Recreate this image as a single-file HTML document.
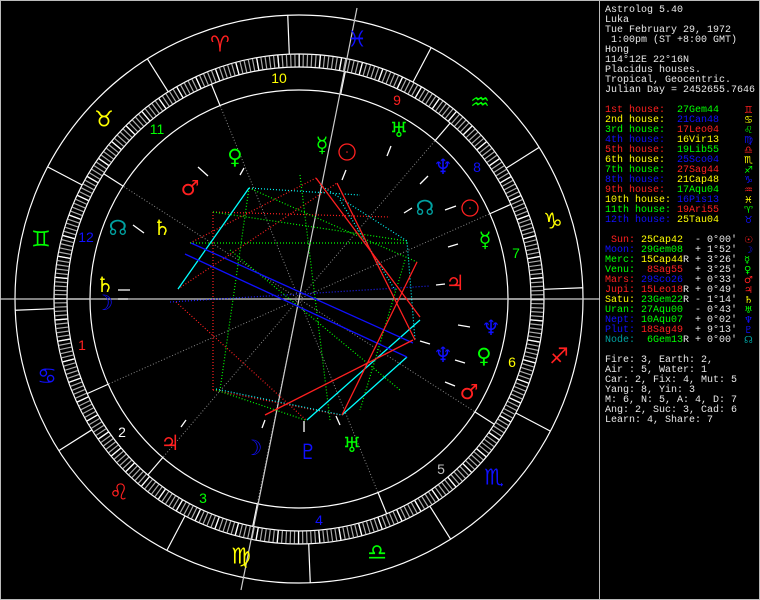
<!DOCTYPE html>
<html><head><meta charset="utf-8"><style>
html,body{margin:0;padding:0;background:#000;}
#w{position:relative;width:760px;height:600px;background:#000;overflow:hidden;}
svg{position:absolute;left:0;top:0;}
.t{position:absolute;left:605px;font:10px/10px "Liberation Mono","DejaVu Sans Mono",monospace;white-space:pre;color:#e8e8e8;}
.g{position:absolute;left:744px;height:10px;overflow:hidden;font:10px/10px "DejaVu Sans",sans-serif;}
.r{color:#ff2020}.y{color:#ffff00}.gr{color:#00ff00}.b{color:#1010ff}.tl{color:#00a0a0}.w{color:#fff}
</style></head><body><div id="w">
<svg width="760" height="600" viewBox="0 0 760 600">
<rect x="0.5" y="0.5" width="759" height="599" fill="none" stroke="#bbb"/>
<line x1="599.5" y1="0" x2="599.5" y2="600" stroke="#bbb"/>
<g fill="none" stroke="#fff" stroke-width="1.2">
<circle cx="299" cy="299" r="284"/>
<circle cx="299" cy="299" r="245"/>
<circle cx="299" cy="299" r="232"/>
<circle cx="299" cy="299" r="209"/>
</g>
<circle cx="299" cy="299" r="238.5" fill="none" stroke="#aaa" stroke-width="12" stroke-dasharray="1.2 2.96"/>
<circle cx="299" cy="299" r="238.5" fill="none" stroke="#fff" stroke-width="12" stroke-dasharray="1.3 19.5"/>
<g stroke="#fff" stroke-width="1.2">
<line x1="544" y1="299" x2="583" y2="299" transform="rotate(-92.27 299 299)"/>
<line x1="544" y1="299" x2="583" y2="299" transform="rotate(-122.27 299 299)"/>
<line x1="544" y1="299" x2="583" y2="299" transform="rotate(-152.27 299 299)"/>
<line x1="544" y1="299" x2="583" y2="299" transform="rotate(-182.27 299 299)"/>
<line x1="544" y1="299" x2="583" y2="299" transform="rotate(-212.27 299 299)"/>
<line x1="544" y1="299" x2="583" y2="299" transform="rotate(-242.27 299 299)"/>
<line x1="544" y1="299" x2="583" y2="299" transform="rotate(-272.27 299 299)"/>
<line x1="544" y1="299" x2="583" y2="299" transform="rotate(-302.27 299 299)"/>
<line x1="544" y1="299" x2="583" y2="299" transform="rotate(-332.27 299 299)"/>
<line x1="544" y1="299" x2="583" y2="299" transform="rotate(-2.27 299 299)"/>
<line x1="544" y1="299" x2="583" y2="299" transform="rotate(-32.27 299 299)"/>
<line x1="544" y1="299" x2="583" y2="299" transform="rotate(-62.27 299 299)"/>
</g>
<g stroke="#fff" stroke-width="1.2">
<line x1="508" y1="299" x2="531" y2="299" transform="rotate(-180 299 299)"/>
<line x1="508" y1="299" x2="531" y2="299" transform="rotate(-204.07 299 299)"/>
<line x1="508" y1="299" x2="531" y2="299" transform="rotate(-229.33 299 299)"/>
<line x1="508" y1="299" x2="531" y2="299" transform="rotate(-258.5 299 299)"/>
<line x1="508" y1="299" x2="531" y2="299" transform="rotate(-292.2 299 299)"/>
<line x1="508" y1="299" x2="531" y2="299" transform="rotate(-327.33 299 299)"/>
<line x1="508" y1="299" x2="531" y2="299" transform="rotate(0 299 299)"/>
<line x1="508" y1="299" x2="531" y2="299" transform="rotate(-24.07 299 299)"/>
<line x1="508" y1="299" x2="531" y2="299" transform="rotate(-49.33 299 299)"/>
<line x1="508" y1="299" x2="531" y2="299" transform="rotate(-78.5 299 299)"/>
<line x1="508" y1="299" x2="531" y2="299" transform="rotate(-112.2 299 299)"/>
<line x1="508" y1="299" x2="531" y2="299" transform="rotate(-147.33 299 299)"/>
</g>
<g stroke="#888" stroke-width="1" stroke-dasharray="1 2">
<line x1="299" y1="299" x2="508" y2="299" transform="rotate(-204.07 299 299)"/>
<line x1="299" y1="299" x2="508" y2="299" transform="rotate(-229.33 299 299)"/>
<line x1="299" y1="299" x2="508" y2="299" transform="rotate(-258.5 299 299)"/>
<line x1="299" y1="299" x2="508" y2="299" transform="rotate(-292.2 299 299)"/>
<line x1="299" y1="299" x2="508" y2="299" transform="rotate(-327.33 299 299)"/>
<line x1="299" y1="299" x2="508" y2="299" transform="rotate(-24.07 299 299)"/>
<line x1="299" y1="299" x2="508" y2="299" transform="rotate(-49.33 299 299)"/>
<line x1="299" y1="299" x2="508" y2="299" transform="rotate(-112.2 299 299)"/>
<line x1="299" y1="299" x2="508" y2="299" transform="rotate(-147.33 299 299)"/>
</g>
<line x1="0" y1="299" x2="600" y2="299" stroke="#ccc" stroke-width="1.2"/>
<line x1="357" y1="8" x2="241" y2="590" stroke="#ccc" stroke-width="1.2"/>
<g stroke-width="1.2" stroke-dasharray="1 2" fill="none">
<path stroke="#ff2020" d="M213 212L213 390M213 212L390 217M190 243L316 178M178 289L337 183M176 302L306 420M213 390L340 415"/>
<path stroke="#00ff00" d="M213 212L407 241M190 243L407 243M249 188L417 262M249 188L220 390M216 390L305 420M300 175L330 420M405 260L360 410M230 250L400 390"/>
<path stroke="#00ffff" d="M249 188L360 195M216 389L342 415M320 185L407 241L415 340M340 200L395 290"/>
<path stroke="#2020ff" d="M170 302L430 286"/>
</g>
<g stroke-width="1.3" fill="none">
<path stroke="#00ffff" d="M178 289L249 188M307 420L420 320M342 415L407 357"/>
<path stroke="#1010ff" d="M191 243L413 343M185 254L407 357"/>
<path stroke="#ff2020" d="M316 178L420 317M337 183L415 340M417 262L342 415M265 415L413 340"/>
</g>
<g stroke="#fff" stroke-width="1.3">
<path d="M118 299L128 299M118 290L130 290M133 225L144 233M198 167L208 176M240 175L244 168M346 170L342 180M391 146L387 156M428 176L420 184M412 208L404 213M456 206L445 210M458 244L448 247M436 285L445 284M470 327L458 325M430 344L420 341M465 363L455 360M455 386L445 382M262 428L265 420M304 432L304 421M340 425L336 416M181 427L186 420"/>
</g>
<g font-family="'Liberation Sans',sans-serif" font-size="14" text-anchor="middle" dominant-baseline="central">
<text x="82" y="345" fill="#ff2020">1</text>
<text x="122" y="432" fill="#ffffff">2</text>
<text x="203" y="498" fill="#00ff00">3</text>
<text x="319" y="520" fill="#1010ff">4</text>
<text x="441" y="469" fill="#c0c0c0">5</text>
<text x="512" y="362" fill="#ffff00">6</text>
<text x="516" y="253" fill="#00ff00">7</text>
<text x="477" y="167" fill="#1010ff">8</text>
<text x="397" y="100" fill="#ff2020">9</text>
<text x="279" y="78" fill="#ffff00">10</text>
<text x="157" y="129" fill="#00ff00">11</text>
<text x="86" y="237" fill="#1010ff">12</text>
</g>
<g font-family="'DejaVu Sans',sans-serif" font-size="22" text-anchor="middle" dominant-baseline="central">
<text x="220" y="45" fill="#ff2020">♈</text>
<text x="104" y="120" fill="#ffff00">♉</text>
<text x="41" y="240" fill="#00ff00">♊</text>
<text x="47" y="377" fill="#1010ff">♋</text>
<text x="119" y="493" fill="#ff2020">♌</text>
<text x="241" y="557" fill="#ffff00">♍</text>
<text x="377" y="553" fill="#00ff00">♎</text>
<text x="494" y="478" fill="#1010ff">♏</text>
<text x="559" y="357" fill="#ff2020">♐</text>
<text x="553" y="222" fill="#ffff00">♑</text>
<text x="480" y="103" fill="#00ff00">♒</text>
<text x="357" y="40" fill="#1010ff">♓</text>
</g>
<g font-family="'DejaVu Sans',sans-serif" font-size="21" text-anchor="middle" dominant-baseline="central">
<text x="399" y="130" fill="#00ff00">♅</text>
<text x="443" y="167" fill="#1010ff">♆</text>
<text x="425" y="208" fill="#00a0a0">☊</text>
<text x="322" y="145" fill="#00ff00">☿</text>
<text x="235" y="157" fill="#00ff00">♀</text>
<text x="190" y="188" fill="#ff2020">♂</text>
<text x="162" y="228" fill="#ffff00">♄</text>
<text x="118" y="228" fill="#00a0a0">☊</text>
<text x="105" y="285" fill="#ffff00">♄</text>
<text x="104" y="303" fill="#1010ff">☽</text>
<text x="485" y="240" fill="#00ff00">☿</text>
<text x="455" y="283" fill="#ff2020">♃</text>
<text x="491" y="328" fill="#1010ff">♆</text>
<text x="443" y="355" fill="#1010ff">♆</text>
<text x="484" y="356" fill="#00ff00">♀</text>
<text x="469" y="392" fill="#ff2020">♂</text>
<text x="170" y="443" fill="#ff2020">♃</text>
<text x="253" y="448" fill="#1010ff">☽</text>
<text x="308" y="452" fill="#1010ff">♇</text>
<text x="352" y="445" fill="#00ff00">♅</text>
</g>
<circle cx="347" cy="152" r="8" fill="none" stroke="#ff2020" stroke-width="1.3"/>
<circle cx="347" cy="152" r="0.8" fill="#ff2020"/>
<circle cx="470" cy="208" r="8" fill="none" stroke="#ff2020" stroke-width="1.3"/>
<circle cx="470" cy="208" r="0.8" fill="#ff2020"/>
</svg>

<div class="t" style="top:6px">Astrolog 5.40</div>
<div class="t" style="top:16px">Luka</div>
<div class="t" style="top:26px">Tue February 29, 1972</div>
<div class="t" style="top:36px"> 1:00pm (ST +8:00 GMT)</div>
<div class="t" style="top:46px">Hong</div>
<div class="t" style="top:56px">114°12E 22°16N</div>
<div class="t" style="top:66px">Placidus houses.</div>
<div class="t" style="top:76px">Tropical, Geocentric.</div>
<div class="t" style="top:86px">Julian Day = 2452655.7646</div>

<div class="t" style="top:106px"><span class="r">1st house:</span>  <span class="gr">27Gem44</span></div><div class="g r" style="top:106px">♊</div>
<div class="t" style="top:116px"><span class="y">2nd house:</span>  <span class="b">21Can48</span></div><div class="g y" style="top:116px">♋</div>
<div class="t" style="top:126px"><span class="gr">3rd house:</span>  <span class="r">17Leo04</span></div><div class="g gr" style="top:126px">♌</div>
<div class="t" style="top:136px"><span class="b">4th house:</span>  <span class="y">16Vir13</span></div><div class="g b" style="top:136px">♍</div>
<div class="t" style="top:146px"><span class="r">5th house:</span>  <span class="gr">19Lib55</span></div><div class="g r" style="top:146px">♎</div>
<div class="t" style="top:156px"><span class="y">6th house:</span>  <span class="b">25Sco04</span></div><div class="g y" style="top:156px">♏</div>
<div class="t" style="top:166px"><span class="gr">7th house:</span>  <span class="r">27Sag44</span></div><div class="g gr" style="top:166px">♐</div>
<div class="t" style="top:176px"><span class="b">8th house:</span>  <span class="y">21Cap48</span></div><div class="g b" style="top:176px">♑</div>
<div class="t" style="top:186px"><span class="r">9th house:</span>  <span class="gr">17Aqu04</span></div><div class="g r" style="top:186px">♒</div>
<div class="t" style="top:196px"><span class="y">10th house:</span> <span class="b">16Pis13</span></div><div class="g y" style="top:196px">♓</div>
<div class="t" style="top:206px"><span class="gr">11th house:</span> <span class="r">19Ari55</span></div><div class="g gr" style="top:206px">♈</div>
<div class="t" style="top:216px"><span class="b">12th house:</span> <span class="y">25Tau04</span></div><div class="g b" style="top:216px">♉</div>

<div class="t" style="top:236px"><span class="r"> Sun:</span> <span class="y">25Cap42</span>  - 0°00'</div><div class="g r" style="top:236px">☉</div>
<div class="t" style="top:246px"><span class="b">Moon:</span> <span class="gr">29Gem08</span>  + 1°52'</div><div class="g b" style="top:246px">☽</div>
<div class="t" style="top:256px"><span class="gr">Merc:</span> <span class="y">15Cap44</span>R + 3°26'</div><div class="g gr" style="top:256px">☿</div>
<div class="t" style="top:266px"><span class="gr">Venu:</span> <span class="r"> 8Sag55</span>  + 3°25'</div><div class="g gr" style="top:266px">♀</div>
<div class="t" style="top:276px"><span class="r">Mars:</span> <span class="b">29Sco26</span>  + 0°33'</div><div class="g r" style="top:276px">♂</div>
<div class="t" style="top:286px"><span class="r">Jupi:</span> <span class="r">15Leo18</span>R + 0°49'</div><div class="g r" style="top:286px">♃</div>
<div class="t" style="top:296px"><span class="y">Satu:</span> <span class="gr">23Gem22</span>R - 1°14'</div><div class="g y" style="top:296px">♄</div>
<div class="t" style="top:306px"><span class="gr">Uran:</span> <span class="gr">27Aqu00</span>  - 0°43'</div><div class="g gr" style="top:306px">♅</div>
<div class="t" style="top:316px"><span class="b">Nept:</span> <span class="gr">10Aqu07</span>  + 0°02'</div><div class="g b" style="top:316px">♆</div>
<div class="t" style="top:326px"><span class="b">Plut:</span> <span class="r">18Sag49</span>  + 9°13'</div><div class="g b" style="top:326px">♇</div>
<div class="t" style="top:336px"><span class="tl">Node:</span> <span class="gr"> 6Gem13</span>R + 0°00'</div><div class="g tl" style="top:336px">☊</div>

<div class="t" style="top:356px">Fire: 3, Earth: 2,</div>
<div class="t" style="top:366px">Air : 5, Water: 1</div>
<div class="t" style="top:376px">Car: 2, Fix: 4, Mut: 5</div>
<div class="t" style="top:386px">Yang: 8, Yin: 3</div>
<div class="t" style="top:396px">M: 6, N: 5, A: 4, D: 7</div>
<div class="t" style="top:406px">Ang: 2, Suc: 3, Cad: 6</div>
<div class="t" style="top:416px">Learn: 4, Share: 7</div>
</div></body></html>
